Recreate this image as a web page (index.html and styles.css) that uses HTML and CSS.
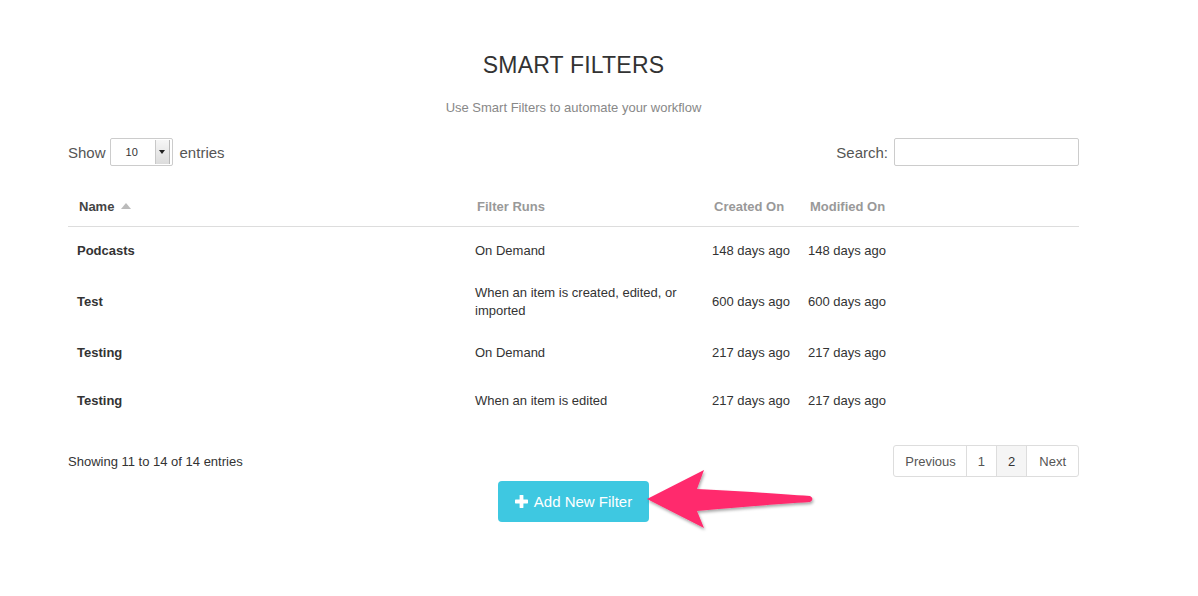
FILE: index.html
```html
<!DOCTYPE html>
<html>
<head>
<meta charset="utf-8">
<link rel="stylesheet" href="styles.css">
</head>
<body>
<div class="page">
  <h1 class="title">SMART FILTERS</h1>
  <p class="subtitle">Use Smart Filters to automate your workflow</p>
  <div class="controls">
    <label class="length">Show
      <span class="select"><span class="select-val">10</span><span class="select-btn"><span class="caret"></span></span></span>
      entries</label>
    <label class="search">Search: <span class="search-input"></span></label>
  </div>
  <table class="grid">
    <thead>
      <tr>
        <th class="c-name sorted">Name <span class="sort-up"></span></th>
        <th class="c-runs">Filter Runs</th>
        <th class="c-created">Created On</th>
        <th class="c-mod">Modified On</th>
        <th class="c-rest"></th>
      </tr>
    </thead>
    <tbody>
      <tr class="r1"><td class="name">Podcasts</td><td>On Demand</td><td>148 days ago</td><td>148 days ago</td><td></td></tr>
      <tr class="r2"><td class="name">Test</td><td>When an item is created, edited, or imported</td><td>600 days ago</td><td>600 days ago</td><td></td></tr>
      <tr class="r3"><td class="name">Testing</td><td>On Demand</td><td>217 days ago</td><td>217 days ago</td><td></td></tr>
      <tr class="r4"><td class="name">Testing</td><td>When an item is edited</td><td>217 days ago</td><td>217 days ago</td><td></td></tr>
    </tbody>
  </table>
  <div class="footer">
    <div class="info">Showing 11 to 14 of 14 entries</div>
    <div class="pager">
      <span class="pg">Previous</span><span class="pg">1</span><span class="pg active">2</span><span class="pg">Next</span>
    </div>
  </div>
  <div class="actions">
    <span class="add-btn"><svg class="plus" width="13" height="13" viewBox="0 0 13 13"><rect x="4.6" y="0" width="3.8" height="13" rx="0.6" fill="#fff"/><rect x="0" y="4.6" width="13" height="3.8" rx="0.6" fill="#fff"/></svg>Add New Filter</span>
  </div>
</div>
<svg class="arrow" width="1198" height="596" viewBox="0 0 1198 596">
  <defs>
    <filter id="sh" x="-20%" y="-50%" width="140%" height="200%">
      <feDropShadow dx="1" dy="2" stdDeviation="1.6" flood-color="#000" flood-opacity="0.35"/>
    </filter>
  </defs>
  <path filter="url(#sh)" fill="#ff2a6d" d="M647,499 L704,470 L697,489 C740,491 780,494 810,496 Q815,499 810,502 C780,504 740,507 697,511 L704,528 Z"/>
</svg>
</body>
</html>
```
FILE: styles.css
```css
html, body {
  margin: 0;
  padding: 0;
  background: #fff;
  font-family: "Liberation Sans", Arial, Helvetica, sans-serif;
  color: #333;
}
.page {
  width: 1011px;
  margin-left: 68px;
  padding-top: 50px;
}
.title {
  margin: 0;
  font-size: 23px;
  font-weight: normal;
  line-height: 30px;
  text-align: center;
  color: #333;
  letter-spacing: 0.2px;
}
.subtitle {
  margin: 20px 0 0;
  font-size: 13px;
  line-height: 16px;
  text-align: center;
  color: #888;
}
.controls {
  display: flex;
  justify-content: space-between;
  align-items: center;
  margin-top: 22px;
  height: 28px;
  font-size: 15px;
  color: #555;
}
.length {
  display: flex;
  align-items: center;
  gap: 4px;
}
.select {
  display: inline-flex;
  align-items: stretch;
  width: 61px;
  height: 26px;
  border: 1px solid #ccc;
  border-radius: 2px;
  background: #fff;
  margin: 0 3px 0 0;
  box-sizing: content-box;
}
.select-val {
  flex: 1;
  font-size: 11px;
  color: #333;
  padding-left: 15px;
  display: flex;
  align-items: center;
}
.select-btn {
  width: 13px;
  margin: 1px 2px 1px 0;
  background: linear-gradient(#f6f6f6, #dcdcdc);
  border-left: 1px solid #c8c8c8;
  border-right: 1px solid #b8b8b8;
  display: flex;
  align-items: center;
  justify-content: center;
}
.caret {
  width: 0;
  height: 0;
  border-left: 3px solid transparent;
  border-right: 3px solid transparent;
  border-top: 4px solid #222;
}
.search {
  display: flex;
  align-items: center;
  gap: 6px;
}
.search-input {
  width: 183px;
  height: 26px;
  border: 1px solid #ccc;
  border-radius: 2px;
  background: #fff;
}
.grid {
  width: 100%;
  border-collapse: collapse;
  margin-top: 27px;
  font-size: 13px;
}
.grid th {
  text-align: left;
  font-weight: bold;
  color: #999;
  padding: 6px 0 11px 10px;
  vertical-align: top;
  line-height: 16px;
  border-bottom: 1px solid #ddd;
}
.grid th.sorted { color: #444; padding-left: 11px; }
.c-name { width: 388px; }
.c-runs { width: 227px; }
.c-created { width: 86px; }
.c-mod { width: 86px; }
.sort-up {
  display: inline-block;
  width: 0;
  height: 0;
  border-left: 5px solid transparent;
  border-right: 5px solid transparent;
  border-bottom: 6px solid #bbb;
  margin-left: 3px;
  vertical-align: 2px;
}
.grid td {
  padding: 0 8px 0 8px;
  vertical-align: middle;
  line-height: 18px;
  color: #333;
}
.grid td.name { font-weight: bold; padding-left: 9px; }
.r1 td { height: 48px; }
.r2 td { height: 54px; }
.r3 td { height: 48px; }
.r4 td { height: 48px; }
.footer {
  display: flex;
  justify-content: space-between;
  align-items: center;
  margin-top: 20px;
}
.info {
  font-size: 13px;
  color: #333;
}
.pager {
  display: flex;
  border: 1px solid #ddd;
  border-radius: 3px;
  height: 30px;
  font-size: 13px;
  color: #555;
}
.pg {
  display: flex;
  align-items: center;
  padding: 0 11px;
  border-left: 1px solid #ddd;
}
.pg:first-child { border-left: none; padding: 0 10px 0 11px; }
.pg.active { background: #f5f5f5; color: #333; }
.pg:last-child { padding: 0 12px; }
.actions {
  display: flex;
  justify-content: center;
  margin-top: 4px;
}
.add-btn {
  display: inline-flex;
  align-items: center;
  gap: 6px;
  height: 41px;
  padding: 0 17px;
  background: #3ec8e1;
  border-radius: 4px;
  color: #fff;
  font-size: 15px;
}
.arrow {
  position: absolute;
  left: 0;
  top: 0;
  pointer-events: none;
}
```
